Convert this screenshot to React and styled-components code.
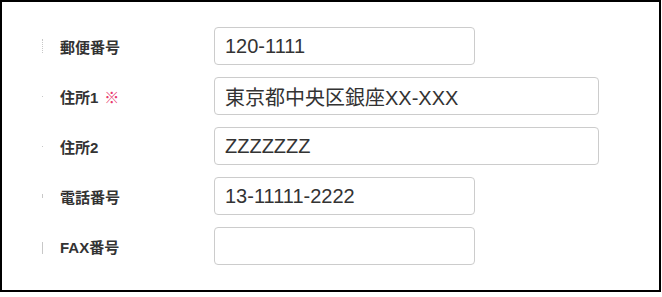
import React from "react";
import styled, { createGlobalStyle } from "styled-components";

const GlobalStyle = createGlobalStyle`
  html, body {
    margin: 0;
    padding: 0;
    background: #fff;
  }
  * {
    box-sizing: border-box;
  }
`;

const fields = [
  { label: "郵便番号", value: "120-1111", wide: false, mark: "dots" },
  { label: "住所1", value: "東京都中央区銀座XX-XXX", wide: true, required: true, mark: "dot" },
  { label: "住所2", value: "ZZZZZZZ", wide: true, mark: "dot" },
  { label: "電話番号", value: "13-11111-2222", wide: false, mark: "short" },
  { label: "FAX番号", value: "", wide: false, mark: "line" },
];

export default function App() {
  return (
    <>
      <GlobalStyle />
      <Frame>
        <Form>
          {fields.map((f) => (
            <Row key={f.label}>
              <Marker kind={f.mark} />
              <Label>
                {f.label}
                {f.required && <Required>※</Required>}
              </Label>
              <Input $wide={f.wide} defaultValue={f.value} readOnly />
            </Row>
          ))}
        </Form>
      </Frame>
    </>
  );
}

/* ================== Styled Components ================== */

const Frame = styled.div`
  width: 661px;
  height: 292px;
  border: 2px solid #000;
  background: #fff;
`;

const Form = styled.div`
  display: flex;
  flex-direction: column;
  gap: 12px;
  padding: 25px 0 0 40px;
`;

const Row = styled.div`
  display: flex;
  align-items: center;
  height: 38px;
`;

const markerHeights = { dots: 14, dot: 1, short: 4, line: 12 };

const Marker = styled.span`
  display: block;
  width: 1px;
  height: ${(p) => markerHeights[p.kind]}px;
  border-left: 1px ${(p) => (p.kind === "dots" ? "dotted" : "solid")} #c8c8c8;
  margin-top: ${(p) => (p.kind === "line" ? 4 : 0)}px;
`;

const Label = styled.label`
  width: 154px;
  margin-left: 17px;
  display: flex;
  align-items: center;
  font-family: "Liberation Sans", "Noto Sans CJK JP", sans-serif;
  font-size: 15px;
  font-weight: bold;
  color: #333;
`;

const Required = styled.span`
  margin-left: 6px;
  font-family: "Noto Sans CJK JP", sans-serif;
  font-size: 15px;
  font-weight: normal;
  color: #e8386d;
`;

const Input = styled.input`
  width: ${(p) => (p.$wide ? 385 : 261)}px;
  height: 38px;
  padding: 0 10px;
  border: 1px solid #ccc;
  border-radius: 4px;
  font-family: "Liberation Sans", "Noto Sans CJK JP", sans-serif;
  font-size: 20px;
  color: #333;
  background: #fff;
  outline: none;
`;
